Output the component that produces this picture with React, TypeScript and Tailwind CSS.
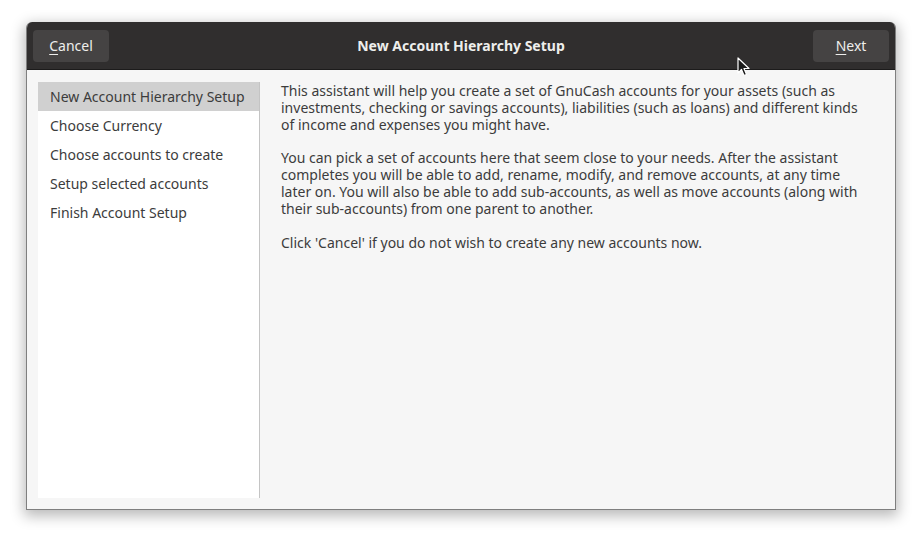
import React from "react";

const font = { fontFamily: '"Noto Sans", "Open Sans", sans-serif' };

function Cursor() {
  return (
    <svg className="absolute left-[737px] top-[57px]" width="14" height="20" viewBox="0 0 14 20">
      <path d="M1 1 L1 16 L4.5 12.5 L7 18.5 L9.5 17.5 L7 11.5 L12 11.5 Z" fill="#1a1a1a" stroke="#ffffff" strokeWidth="1.2" strokeLinejoin="round" />
    </svg>
  );
}

export default function App() {
  const steps = [
    "New Account Hierarchy Setup",
    "Choose Currency",
    "Choose accounts to create",
    "Setup selected accounts",
    "Finish Account Setup",
  ];
  return (
    <div className="relative w-[922px] h-[539px] bg-white overflow-hidden" style={font}>
      <div className="absolute left-[26px] top-[22px] w-[870px] h-[488px] flex flex-col rounded-t-[6px] overflow-hidden border border-t-0 border-[#7f7f7f] shadow-[0_4px_14px_2px_rgba(0,0,0,0.28)] bg-[#f6f6f6]">
        <div className="h-[48px] shrink-0 bg-[#302e2e] border-b border-[#1c1b1b] flex items-center justify-between px-[6px]">
          <button className="w-[76px] h-[32px] rounded-[4px] bg-[#454343] text-[#eeeeec] text-[14px]">
            <span className="underline underline-offset-[3px]">C</span>ancel
          </button>
          <div className="text-[#eeeeec] text-[14px] font-bold">New Account Hierarchy Setup</div>
          <button className="w-[76px] h-[32px] rounded-[4px] bg-[#454343] text-[#eeeeec] text-[14px]">
            <span className="underline underline-offset-[3px]">N</span>ext
          </button>
        </div>
        <div className="flex-1 flex pt-[12px] pb-[11px] pl-[11px]">
          <div className="w-[222px] bg-white border-r border-[#c4c4c4] flex flex-col">
            {steps.map((s, i) => (
              <div
                key={s}
                className={
                  "h-[29px] flex items-center pl-[12px] text-[14px] text-[#3c3c3c] whitespace-nowrap " +
                  (i === 0 ? "bg-[#d0d0d0]" : "")
                }
              >
                {s}
              </div>
            ))}
          </div>
          <div className="flex-1 pl-[21px] pt-[0px] text-[14px] leading-[17px] text-[#3c3c3c] whitespace-nowrap flex flex-col gap-[16px]">
            <p>
              This assistant will help you create a set of GnuCash accounts for your assets (such as
              <br />
              investments, checking or savings accounts), liabilities (such as loans) and different kinds
              <br />
              of income and expenses you might have.
            </p>
            <p>
              You can pick a set of accounts here that seem close to your needs. After the assistant
              <br />
              completes you will be able to add, rename, modify, and remove accounts, at any time
              <br />
              later on. You will also be able to add sub-accounts, as well as move accounts (along with
              <br />
              their sub-accounts) from one parent to another.
            </p>
            <p className="mt-[1px]">Click 'Cancel' if you do not wish to create any new accounts now.</p>
          </div>
        </div>
      </div>
      <Cursor />
    </div>
  );
}
